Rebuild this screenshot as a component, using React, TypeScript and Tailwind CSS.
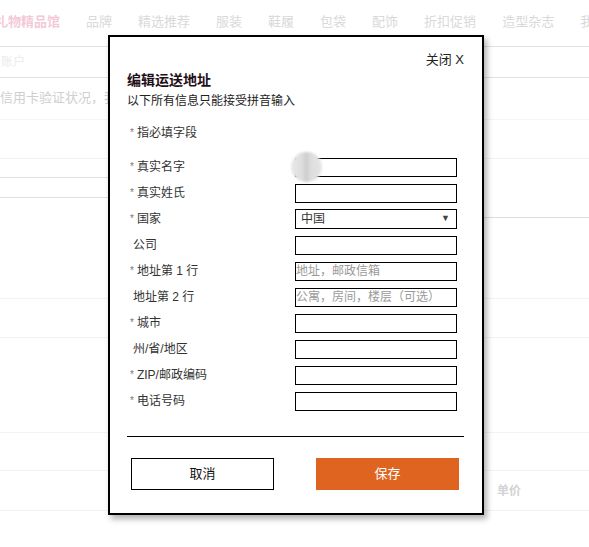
import React from 'react';

const cjk = { fontFamily: '"Liberation Sans", "Noto Sans CJK SC", sans-serif' };

const navItems = ['品牌', '精选推荐', '服装', '鞋履', '包袋', '配饰', '折扣促销', '造型杂志', '我的'];

interface Field {
  label: string;
  required: boolean;
  kind?: 'select';
  placeholder?: string;
}

const fields: Field[] = [
  { label: '真实名字', required: true },
  { label: '真实姓氏', required: true },
  { label: '国家', required: true, kind: 'select' },
  { label: '公司', required: false },
  { label: '地址第 1 行', required: true, placeholder: '地址，邮政信箱' },
  { label: '地址第 2 行', required: false, placeholder: '公寓，房间，楼层（可选）' },
  { label: '城市', required: true },
  { label: '州/省/地区', required: false },
  { label: 'ZIP/邮政编码', required: true },
  { label: '电话号码', required: true },
];

function Background() {
  return (
    <div className="w-full bg-white" style={cjk}>
      {/* top nav */}
      <div className="h-[47px] border-b border-[#e2e2e2] flex items-center gap-[26px] pb-[2px] text-[13px] leading-[16px] overflow-hidden whitespace-nowrap">
        <span className="shrink-0 ml-[-5px] font-bold text-[#f3c9d8]">礼物精品馆</span>
        {navItems.map((n) => (
          <span key={n} className="shrink-0 text-[#d9d9d9]">{n}</span>
        ))}
      </div>
      <div className="h-[31px] border-b border-[#e2e2e2] flex items-center text-[12px] text-[#ebebeb]">
        <span className="ml-[1px]">账户</span>
      </div>
      <div className="h-[42px] border-b border-[#f5f5f5] flex items-center pb-[2px] text-[13px] text-[#cfcfcf] whitespace-nowrap">
        信用卡验证状况，我们
      </div>
      <div className="h-[39px] border-b border-[#f3f3f3]" />
      <div className="flex items-start">
        <div className="w-[300px]">
          <div className="h-[19px] border-b border-[#e0e0e0]" />
          <div className="h-[20px] border-b border-[#e0e0e0]" />
        </div>
        <div className="flex-1 h-[59px] border-b border-[#dedede]" />
      </div>
      <div className="h-[81px] border-b border-[#f3f3f3]" />
      <div className="h-[39px] border-b border-[#f3f3f3]" />
      <div className="h-[95px] border-b border-[#f3f3f3]" />
      <div className="h-[38px] border-b border-[#f3f3f3]" />
      <div className="h-[40px] border-b border-[#f3f3f3] flex items-center">
        <span className="ml-[497px] text-[12px] font-bold text-[#d2d2d2]">单价</span>
      </div>
    </div>
  );
}

function Row({ field, first }: { field: Field; first: boolean }) {
  return (
    <div className="h-[26px] flex items-center">
      <div className="w-[165px] text-[12px] leading-[16px] text-[#333] whitespace-nowrap">
        {field.required ? (
          <>
            <span className="text-[#777] text-[10px] align-top">*</span>
            <span className="ml-[3px]">{field.label}</span>
          </>
        ) : (
          <span className="pl-[3px]">{field.label}</span>
        )}
      </div>
      <div className="relative">
        {field.kind === 'select' ? (
          <div className="w-[162px] h-[20px] border border-black flex items-center justify-between pl-[5px] pr-[6px] text-[12px] text-[#333]">
            <span>中国</span>
            <span className="text-[9px] text-[#444]">▼</span>
          </div>
        ) : (
          <input
            readOnly
            placeholder={field.placeholder}
            className="block w-[162px] h-[19px] border border-black px-0 text-[12px] leading-[17px] outline-none placeholder:text-[#9a9a9a]"
            style={cjk}
          />
        )}
        {first && (
          <div className="absolute left-[-4px] top-[-6px] w-[31px] h-[30px] rounded-full blur-[1px] bg-[linear-gradient(90deg,#e8e8e8_0%,#dedede_35%,#cdcdcd_50%,#dcdcdc_62%,#e6e6e6_100%)]" />
        )}
      </div>
    </div>
  );
}

function AddressModal() {
  return (
    <div
      className="absolute left-[108px] top-[35px] w-[376px] h-[480px] bg-white border-2 border-black shadow-[3px_4px_6px_rgba(0,0,0,0.3)] flex flex-col"
      style={cjk}
    >
      <div className="pt-[15px] pr-[18px] text-right text-[13px] leading-[16px] text-[#222]">关闭 X</div>

      <div className="pl-[17px]">
        <h2 className="mt-[3px] text-[14px] leading-[18px] font-bold text-[#1f0f18]">编辑运送地址</h2>
        <p className="mt-[4px] text-[12px] leading-[16px] text-[#222]">以下所有信息只能接受拼音输入</p>
        <p className="mt-[16px] ml-[3px] text-[12px] leading-[16px] text-[#333]">
          <span className="text-[#777] text-[10px] align-top">*</span>
          <span className="ml-[3px]">指必填字段</span>
        </p>
      </div>

      <div className="mt-[13px] pl-[20px]">
        {fields.map((f, i) => (
          <Row key={f.label} field={f} first={i === 0} />
        ))}
      </div>

      <div className="mt-[22px] ml-[17px] mr-[18px] h-px bg-black" />

      <div className="mt-[21px] pl-[21px] flex gap-[42px]">
        <button className="w-[143px] h-[32px] border border-black bg-white text-[13px] text-[#111]" style={cjk}>
          取消
        </button>
        <button className="w-[143px] h-[32px] bg-[#df6420] text-[13px] text-white" style={cjk}>
          保存
        </button>
      </div>
    </div>
  );
}

export default function App() {
  return (
    <div className="relative w-[589px] h-[547px] overflow-hidden bg-white">
      <Background />
      <AddressModal />
    </div>
  );
}
